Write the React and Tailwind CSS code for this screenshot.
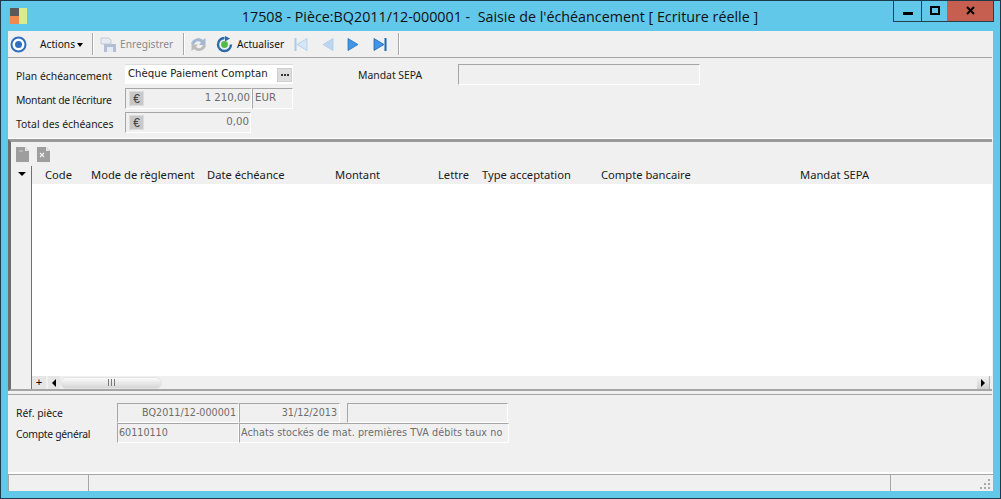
import React from 'react';

const sunken = 'border border-t-[#a6a6a6] border-l-[#a6a6a6] border-r-white border-b-white bg-[#f0f0f0] text-[#6d6d6d]';
const labelFont = "font-['Noto_Sans',sans-serif] text-[10.4px] leading-none text-[#1a1a1a]";
const toolFont = "font-['Noto_Sans',sans-serif] text-[10.2px] leading-none";
const headFont = "font-['Noto_Sans',sans-serif] text-[11.2px] leading-none text-[#1a1a1a]";
const fieldFont = "font-['DejaVu_Sans',sans-serif] text-[10.2px] leading-none";
const footFont = "font-['DejaVu_Sans',sans-serif] text-[9.6px] leading-none";

const columns = [
  ['Code', 'w-[46px]'],
  ['Mode de règlement', 'w-[116px]'],
  ['Date échéance', 'w-[128px]'],
  ['Montant', 'w-[103px]'],
  ['Lettre', 'w-[44px]'],
  ['Type acceptation', 'w-[119px]'],
  ['Compte bancaire', 'w-[199px]'],
  ['Mandat SEPA', 'w-[120px]'],
];

const Euro = () => (
  <span className="w-[15px] h-[15px] bg-[#c8c8c8] border border-[#dcdcdc] flex items-center justify-center font-['Liberation_Sans',sans-serif] text-[12px] leading-none text-[#444]">
    €
  </span>
);

const NavIcon = ({ dir, bar, color, line }) => (
  <svg width="15" height="15" viewBox="0 0 15 15">
    {dir === 'left' ? (
      <path d="M13 1.5 L13 13.5 L3 7.5 Z" fill={color} stroke={line} strokeWidth="0.8" />
    ) : (
      <path d="M2 1.5 L2 13.5 L12 7.5 Z" fill={color} stroke={line} strokeWidth="0.8" />
    )}
    {bar && <rect x={dir === 'left' ? 0.5 : 12.5} y="1" width="2" height="13" fill={line} />}
  </svg>
);

const Separator = () => <div className="w-px h-[22px] bg-[#a8a8a8] border-r border-white box-content" />;

const DocIcon = ({ cross }) => (
  <svg width="13" height="15" viewBox="0 0 13 15">
    <path d="M0 0 H9 L13 4 V15 H0 Z" fill="#9e9e9e" />
    <path d="M9 0 L13 4 H9 Z" fill="#e4e4e4" />
    {cross && <path d="M3 10 L7 6 M3 6 L7 10" stroke="#f0f0f0" strokeWidth="1.2" />}
    {!cross && <path d="M3 4 H7" stroke="#c4c4c4" strokeWidth="1.2" />}
  </svg>
);

const App = () => {
  return (
    <div className="w-[1001px] h-[499px] overflow-hidden bg-[#62c8ea] border border-[#1d3b4d] flex flex-col">
      {/* barre de titre */}
      <div className="h-[30px] shrink-0 flex relative">
        <svg className="mt-[7px] ml-[9px]" width="17" height="16" viewBox="0 0 17 16">
          <rect x="0" y="0" width="9" height="8" fill="#5a5a5a" />
          <rect x="0" y="8" width="9" height="8" fill="#ef8a4c" />
          <rect x="9" y="0" width="8" height="16" fill="#d8ec8e" />
        </svg>
        <div className="flex-1 pr-[27px] pt-[6px] text-center font-['Open_Sans',sans-serif] text-[14.3px] leading-[19px] text-[#111] whitespace-pre">
          17508 - Pièce:BQ2011/12-000001 -  Saisie de l'échéancement [ Ecriture réelle ]
        </div>
        <div className="absolute right-[6px] top-0 flex h-[21px] border border-t-0 border-[#23404f]">
          <div className="w-[28px] flex items-end justify-center pb-[6px] border-r border-[#23404f]">
            <div className="w-[10px] h-[3px] bg-black" />
          </div>
          <div className="w-[25px] flex items-center justify-center pb-px">
            <div className="w-[10px] h-[9px] border-2 border-black" />
          </div>
          <div className="w-[46px] bg-[#c75f50] flex items-center justify-center pb-px">
            <svg width="9" height="9" viewBox="0 0 9 9">
              <path d="M1 1 L8 8 M8 1 L1 8" stroke="#000" strokeWidth="2" />
            </svg>
          </div>
        </div>
      </div>

      {/* contenu */}
      <div className="mx-[7px] flex-1 bg-[#f0f0f0] flex flex-col min-h-0">
        <div className="h-[27px] shrink-0 flex items-center border-b border-[#a6a6a6] mr-px">
          <svg className="ml-[2px]" width="17" height="17" viewBox="0 0 17 17">
            <circle cx="8.5" cy="8.5" r="7" fill="#fff" stroke="#2f6fc0" strokeWidth="2" />
            <circle cx="8.5" cy="8.5" r="3.5" fill="#2f6fc0" />
          </svg>
          <span className={`${toolFont} text-[#111] ml-[13px] w-[36px]`}>Actions</span>
          <span className="ml-[1px] mt-px w-0 h-0 border-l-[3.5px] border-r-[3.5px] border-t-[4px] border-l-transparent border-r-transparent border-t-black" />
          <div className="ml-[9px]"><Separator /></div>
          <svg className="ml-[6px]" width="16" height="15" viewBox="0 0 16 15">
            <path d="M1 1 H9 L11 3 V7 H1 Z" fill="#e6eaf1" stroke="#c3cad6" />
            <rect x="4" y="7" width="12" height="8" fill="#b4bfd5" />
            <rect x="7" y="10" width="6" height="5" fill="#e6ebf3" />
          </svg>
          <span className={`${toolFont} text-[#8a8a8a] ml-[4px] w-[54px]`}>Enregistrer</span>
          <div className="ml-[9px]"><Separator /></div>
          <svg className="ml-[5px]" width="17" height="17" viewBox="0 0 17 17">
            <path d="M1 8 C2 3 9 0 13 4 L15.5 2 V9 H9 L11 6.5 C8.5 4.5 5 5 4 9 Z" fill="#a3b8d0" />
            <path d="M16 9.5 C15 14.5 8 17 4 13 L1.5 15 V8.5 H8 L6 11 C8.5 13 12 12.5 13 8.5 Z" fill="#bcbcbc" />
          </svg>
          <svg className="ml-[9px]" width="17" height="17" viewBox="0 0 17 17">
            <path d="M8.5 2 A6.5 6.5 0 1 0 15 8.5" fill="none" stroke="#2a6aa8" strokeWidth="2.4" />
            <path d="M9 0 L14 2.5 L9 5.5 Z" fill="#2a6aa8" />
            <circle cx="8.5" cy="8.5" r="3.4" fill="#55b848" />
          </svg>
          <span className={`${toolFont} text-[#111] ml-[4px] w-[47px]`}>Actualiser</span>
          <div className="ml-[10px] flex gap-[11px]">
            <NavIcon dir="left" bar color="#d6e6f6" line="#a9cbed" />
            <NavIcon dir="left" color="#bcd6f0" line="#a9cbed" />
            <NavIcon dir="right" color="#3f95e8" line="#2a73c5" />
            <NavIcon dir="right" bar color="#3f95e8" line="#1f64b5" />
          </div>
          <div className="ml-[11px]"><Separator /></div>
        </div>

        {/* formulaire */}
        <div className="h-[81px] shrink-0 flex pl-[8px] pt-[6px] border-b border-white">
          <div className="w-[342px] flex flex-col">
            <div className="flex items-center h-[20px]">
              <span className={`${labelFont} w-[109px] pt-[4px]`}>Plan échéancement</span>
              <div className="w-[168px] h-[20px] bg-white border-t border-[#dcdcdc] flex items-center justify-between pl-[3px] pr-px">
                <span className={`${fieldFont} text-[#222]`}>Chèque Paiement Comptan</span>
                <span className="w-[15px] h-[14px] bg-[#dedede] border border-[#cfcfcf] flex items-center justify-center gap-px">
                  <i className="w-[2px] h-[2px] bg-[#333]" />
                  <i className="w-[2px] h-[2px] bg-[#333]" />
                  <i className="w-[2px] h-[2px] bg-[#333]" />
                </span>
              </div>
            </div>
            <div className="flex items-center h-[21px] mt-[4px]">
              <span className={`${labelFont} tracking-[-0.3px] w-[109px] pt-[3px]`}>Montant de l'écriture</span>
              <div className={`${sunken} ${fieldFont} w-[127px] h-[21px] flex items-center justify-between pl-[3px] pr-[1px]`}>
                <Euro />
                <span>1 210,00</span>
              </div>
              <div className={`${sunken} ${fieldFont} w-[41px] h-[21px] flex items-center pl-[2px]`}>EUR</div>
            </div>
            <div className="flex items-center h-[21px] mt-[3px]">
              <span className={`${labelFont} w-[109px] pt-[3px]`}>Total des échéances</span>
              <div className={`${sunken} ${fieldFont} w-[126px] h-[21px] flex items-center justify-between pl-[3px] pr-[1px]`}>
                <Euro />
                <span>0,00</span>
              </div>
            </div>
          </div>
          <div className="flex h-[21px] items-center">
            <span className={`${labelFont} w-[100px] pt-[1px]`}>Mandat SEPA</span>
            <div className={`${sunken} w-[242px] h-[21px]`} />
          </div>
        </div>

        {/* grille */}
        <div className="h-[252px] shrink-0 flex flex-col border-t-[3px] border-t-[#9a9a9a] border-l-[3px] border-l-[#6e6e6e] border-b-2 border-b-[#a6a6a6] mr-px">
          <div className="h-[24px] shrink-0 flex items-center gap-[8px] pl-[5px]">
            <DocIcon />
            <DocIcon cross />
          </div>
          <div className="flex flex-1 min-h-0">
            <div className="w-[20px] shrink-0 flex flex-col">
              <div className="h-[18px] flex justify-center pt-[6px] pl-[2px]">
                <span className="w-0 h-0 border-l-[4px] border-r-[4px] border-t-[4px] border-l-transparent border-r-transparent border-t-black" />
              </div>
            </div>
            <div className="w-px shrink-0 bg-[#707070]" />
            <div className="flex-1 min-w-0 flex flex-col">
              <div className="h-[18px] shrink-0 flex pl-[13px] items-center">
                {columns.map(([name, width]) => (
                  <span key={name} className={`${headFont} ${width} shrink-0 whitespace-nowrap`}>{name}</span>
                ))}
              </div>
              <div className="flex-1 bg-white" />
              <div className="h-[13px] shrink-0 flex items-center">
                <span className="w-[14px] h-[13px] bg-[#e6e6e6] flex items-center justify-center font-['Liberation_Sans',sans-serif] text-[11px] leading-none text-black">+</span>
                <span className="ml-[2px] w-[12px] h-[13px] bg-[#e6e6e6] flex items-center justify-center">
                  <span className="w-0 h-0 border-t-[4px] border-b-[4px] border-r-[4px] border-t-transparent border-b-transparent border-r-black" />
                </span>
                <div className="w-[102px] h-[12px] rounded-full bg-gradient-to-b from-[#fafafa] to-[#d6d6d6] border border-[#e4e4e4] flex items-center justify-center">
                  <span className="w-[7px] h-[7px] border-x border-[#777] flex justify-center"><i className="w-px h-full bg-[#777]" /></span>
                </div>
                <div className="flex-1" />
                <span className="w-[13px] h-[13px] mr-[2px] bg-gradient-to-b from-[#f4f4f4] to-[#cfcfcf] border-r border-[#b0b0b0] flex items-center justify-center">
                  <span className="w-0 h-0 border-t-[4px] border-b-[4px] border-l-[4px] border-t-transparent border-b-transparent border-l-black" />
                </span>
              </div>
            </div>
          </div>
        </div>

        {/* pied */}
        <div className="flex-1 min-h-0 border-t border-[#a6a6a6] mt-[3px] mr-px">
          <div className="pt-[8px] pl-[8px] flex flex-col">
            <div className="flex h-[20px]">
              <span className={`${labelFont} w-[101px] pt-[5px]`}>Réf. pièce</span>
              <div className={`${sunken} ${footFont} w-[122px] h-[20px] flex items-center justify-end pr-[2px] pb-px`}>BQ2011/12-000001</div>
              <div className={`${sunken} ${footFont} w-[101px] h-[20px] flex items-center justify-end pr-[2px] pb-px`}>31/12/2013</div>
              <div className="w-[7px]" />
              <div className={`${sunken} w-[161px] h-[20px]`} />
            </div>
            <div className="flex h-[20px]">
              <span className={`${labelFont} tracking-[-0.3px] w-[101px] pt-[6px]`}>Compte général</span>
              <div className={`${sunken} ${footFont} w-[122px] h-[20px] flex items-center pl-[1px]`}>60110110</div>
              <div className={`${sunken} ${footFont} tracking-[0.1px] w-[270px] h-[20px] flex items-center pl-[1px] whitespace-nowrap`}>Achats stockés de mat. premières TVA débits taux no</div>
            </div>
          </div>
        </div>

        {/* barre d'état */}
        <div className="h-[19px] shrink-0 border-t-2 border-t-white flex relative">
          <div className="flex-1 flex border-t border-[#a6a6a6]">
            <div className="w-[81px] border-r border-[#a6a6a6] border-l" />
            <div className="flex-1" />
            <div className="w-[103px] border-l border-[#a6a6a6] relative">
              <svg className="absolute right-[3px] bottom-[2px]" width="11" height="11" viewBox="0 0 11 11">
                <path d="M9 1h2v2H9zM5 5h2v2H5zM9 5h2v2H9zM1 9h2v2H1zM5 9h2v2H5zM9 9h2v2H9z" fill="#a9a9a9" />
              </svg>
            </div>
          </div>
        </div>
      </div>
      <div className="h-[7px] shrink-0" />
    </div>
  );
};

export default App;
